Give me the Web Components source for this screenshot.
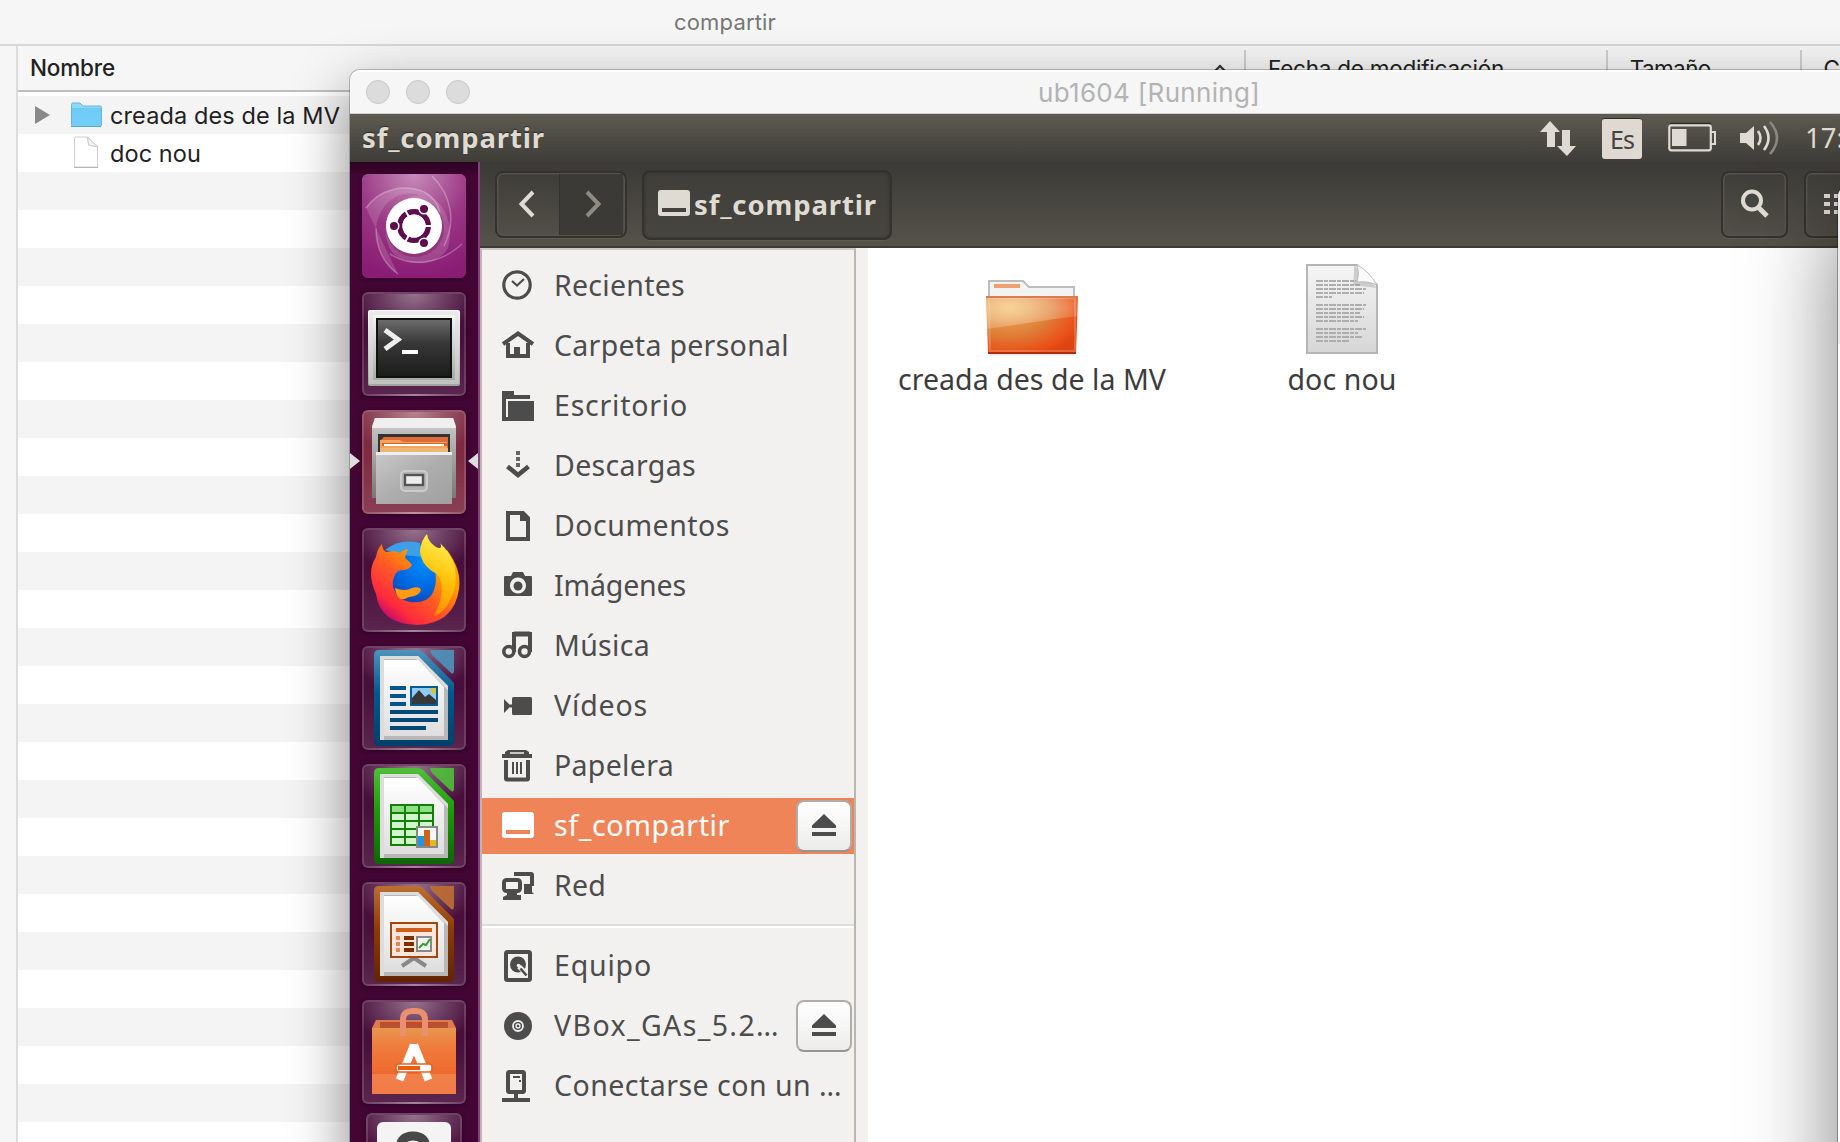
<!DOCTYPE html>
<html lang="es">
<head>
<meta charset="utf-8">
<title>compartir</title>
<style>
html,body{margin:0;height:100%;overflow:hidden;background:#f6f6f6}
body{font-family:Inter,"Liberation Sans",sans-serif}
</style>
</head>
<body>
<desk-top></desk-top>
<script>
const define = (name, css, html, after) => {
  const t = document.createElement('template');
  t.innerHTML = `<style>*{box-sizing:border-box}${css}</style>${html}`;
  customElements.define(name, class extends HTMLElement {
    connectedCallback() {
      if (this.shadowRoot) return;
      this.attachShadow({mode: 'open'}).append(t.content.cloneNode(true));
      if (after) after(this, this.shadowRoot);
    }
  });
};

/* Text line whose tracking is tuned so that it spans the width in `w`. */
define('fit-text', `:host{display:block;white-space:pre;line-height:1.3}span{display:inline-block}`,
  `<span><slot></slot></span>`, (el, root) => {
    const w = +el.getAttribute('w'), s = root.querySelector('span');
    if (!w) return;
    const n = el.textContent.length;
    s.style.letterSpacing = ((w - s.getBoundingClientRect().width) / n) + 'px';
  });

/* ---------- symbolic icons, 32px grid ---------- */
const icons = {
  recent: `<circle cx="15" cy="15" r="13.2" fill="none" stroke="currentColor" stroke-width="3.2"/><path d="M10 11l5 4.6 7-6.6" fill="none" stroke="currentColor" stroke-width="2.2"/>`,
  home: `<path d="M1 14L16 3.500l15 10.500" fill="none" stroke="currentColor" stroke-width="4"/><path d="M6 13v13h20V13" fill="none" stroke="currentColor" stroke-width="4"/><path d="M12 17h6v10h-6z" fill="currentColor"/>`,
  desk: `<path d="M0 1h12v4h16v4H4v18h2V11h26v20H0z" fill="currentColor"/>`,
  down: `<path d="M14 1h4v4h-4zM14 7h4v4h-4zM14 13h4v4h-4z" fill="currentColor" opacity=".85"/><path d="M5.500 16.500L16 25l10.500-8.500" fill="none" stroke="currentColor" stroke-width="4.600"/>`,
  doc: `<path d="M6 3h15l5 5v21H6z" fill="none" stroke="currentColor" stroke-width="4"/><path d="M18 2v9h9V8l-6-6z" fill="currentColor"/>`,
  cam: `<path fill-rule="evenodd" d="M2 7q0-1 1-1h6l2-4h10l2 4h6q1 0 1 1v18q0 1-1 1H3q-1 0-1-1zM16 7.500a8 8 0 1 0 .01 0z" fill="currentColor"/><circle cx="16" cy="16" r="4.500" fill="currentColor"/>`,
  music: `<path d="M12 22V4h16v18" fill="none" stroke="currentColor" stroke-width="4"/><path d="M12 4h16" stroke="currentColor" stroke-width="5"/><circle cx="6.800" cy="21.500" r="5" fill="none" stroke="currentColor" stroke-width="3.600"/><circle cx="22.500" cy="21.500" r="5" fill="none" stroke="currentColor" stroke-width="3.600"/>`,
  video: `<rect x="10" y="7" width="20" height="18" rx="1.500" fill="currentColor"/><path d="M2 9l5 5v4l-5 5zM6 14.500h5v3H6z" fill="currentColor"/>`,
  trash: `<path d="M6 0h18l3 2v2h3v4H0V4h3V2z" fill="currentColor"/><path d="M8 3h14" stroke="#f2f1f0" stroke-width="1.500"/><path d="M4 10V28.500q0 1 1 1h20q1 0 1-1V10" fill="none" stroke="currentColor" stroke-width="4"/><path d="M11 12v12M15 12v12M19 12v12" stroke="currentColor" stroke-width="2"/>`,
  drive: `<path fill-rule="evenodd" d="M3 2h26q3 0 3 3v20q0 3-3 3H3q-3 0-3-3V5q0-3 3-3zM4 20v4h24v-4z" fill="currentColor"/>`,
  net: `<path d="M12 2h17q3 0 3 3v11h-2v6l2 2H22V14h6V6H12z" fill="currentColor"/><rect x="2" y="10" width="16" height="11" rx="2.500" fill="none" stroke="currentColor" stroke-width="4"/><path d="M5 20h10v5h4v5H1v-3l4-2z" fill="currentColor"/>`,
  disk: `<rect x="4" y="2" width="24" height="28" rx="1.500" fill="none" stroke="currentColor" stroke-width="4"/><circle cx="16" cy="14.500" r="8" fill="currentColor"/><path d="M17 16.500l7 7" stroke="#f2f1f0" stroke-width="5"/><circle cx="16.500" cy="15.500" r="1.800" fill="#f2f1f0"/><path d="M18.500 18.500l6 7" stroke="currentColor" stroke-width="2.600"/>`,
  disc: `<circle cx="16" cy="16" r="14" fill="currentColor"/><circle cx="16" cy="16" r="5" fill="none" stroke="#f2f1f0" stroke-width="1.800"/><circle cx="16" cy="16" r="2" fill="none" stroke="#f2f1f0" stroke-width="1.300"/>`,
  server: `<rect x="6" y="2" width="16" height="20" rx="1.500" fill="none" stroke="currentColor" stroke-width="4"/><path d="M11 7h7M17 11h2M14 22v7" stroke="currentColor" stroke-width="2"/><path d="M0 28h28v4H0zM12 22h4v7h-4z" fill="currentColor"/>`,
  eject: `<path d="M16 4l12 11.500V18H4v-2.500zM4 22h24v4H4z" fill="currentColor"/>`,
  find: `<circle cx="13" cy="12.500" r="9" fill="none" stroke="currentColor" stroke-width="4"/><path d="M19 19l9 9" stroke="currentColor" stroke-width="5"/>`,
  prev: `<path d="M20 4l-11.500 12 11.500 12" fill="none" stroke="currentColor" stroke-width="4"/>`,
  next: `<path d="M11 4l11.500 12-11.500 12" fill="none" stroke="currentColor" stroke-width="4"/>`
};
define('sym-icon', `:host{display:block;width:32px;height:32px;flex:none}svg{display:block;width:100%;height:100%}`, `<svg viewBox="0 0 32 32"></svg>`,
  (el, r) => r.querySelector('svg').innerHTML = icons[el.getAttribute('name')]);

/* ---------- Finder window behind ---------- */
define('finder-row', `
:host{display:flex;align-items:center;height:38px;flex:none;background:#fff;color:#1f1f1f;font-size:23.500px}
:host(:nth-child(odd)){background:#f4f4f4}
.a{width:53px;padding-left:17px}.i{width:39px;height:36px}.t{padding-top:2px}`,
`<div class="a"><slot name="arrow"></slot></div><div class="i"><slot name="icon"></slot></div><div class="t"><slot></slot></div>`);

define('finder-window', `
:host{display:flex;flex-direction:column;height:1142px;background:#f6f6f6}
header{height:46px;flex:none;border-bottom:2px solid #d8d8d8;display:flex;align-items:center;padding-left:674px;font-size:22px;color:#777}
main{flex:1;display:flex;padding-left:16px}
.list{flex:1;border-left:2px solid #dcdcdc;display:flex;flex-direction:column;background:#fff;height:1096px;overflow:hidden}
.head{height:46px;flex:none;background:#f6f6f6;border-bottom:2px solid #bfbfbf;display:flex;align-items:center;font-size:22.500px;color:#222}
.head .n{width:1196px;padding-left:12px;font-weight:500}
.c{align-self:stretch;margin-top:4px;border-left:2px solid #cfcfcf;padding-left:22px;display:flex;align-items:center;padding-bottom:3px}
.rows{padding-top:4px}svg{display:block}`,
`<header><fit-text w="102">compartir</fit-text></header>
<main><div class="list"><div class="head"><fit-text class="n" w="85">Nombre</fit-text>
<svg width="14" height="10" style="margin-right:17px"><path d="M1.500 8.500L7 3l5.500 5.500" fill="none" stroke="#333" stroke-width="2.200"/></svg>
<div class="c" style="width:362px"><fit-text w="236">Fecha de modificación</fit-text></div>
<div class="c" style="width:194px"><fit-text w="81">Tamaño</fit-text></div>
<div class="c"><fit-text>C</fit-text></div></div><div class="rows"></div></div></main>`,
(el, r) => {
  const rows = r.querySelector('.rows');
  rows.innerHTML = `<finder-row><svg slot="arrow" width="15" height="18"><path d="M0 0l15 9-15 9z" fill="#898989"/></svg>
<svg slot="icon" width="34" height="36"><defs><linearGradient id="f" x2="0" y2="1"><stop offset="0" stop-color="#6ccbf5"/><stop offset="1" stop-color="#74d0fa"/></linearGradient></defs><path d="M.5 25V7.500q0-1.500 1.500-1.500h7l3 3h17q1.500 0 1.500 1.500V28q0 1-1 1H1.500q-1 0-1-1z" fill="#8fd8fa" stroke="#68b4dc" stroke-width="1"/><path d="M1 11h29v17q0 .8-1 .8H2q-1 0-1-.8z" fill="url(#f)"/><path d="M0 29.500h30" stroke="#54a9d6"/></svg><fit-text w="230">creada des de la MV</fit-text></finder-row>
<finder-row><svg slot="icon" width="34" height="36"><path d="M3.500 3q0-1 1-1h12l10 10v20H3.500z" fill="#fff" stroke="#cfcfcf"/><path d="M16.500 2l1 8 9 2z" fill="#f4f4f4" stroke="#c4c4c4"/><path d="M3 32.500h24" stroke="#b4b4b4"/></svg><fit-text w="91">doc nou</fit-text></finder-row>` + '<finder-row></finder-row>'.repeat(26);
});

/* ---------- Unity launcher ---------- */
const office = (id, c1, c2, c3, body) => `<defs><linearGradient id="${id}" x2="0" y2="1"><stop offset="0" stop-color="${c1}"/><stop offset=".45" stop-color="${c2}"/><stop offset="1" stop-color="${c3}"/></linearGradient><linearGradient id="${id}w" x2="0" y2="1"><stop offset="0" stop-color="#fff"/><stop offset="1" stop-color="#dedede"/></linearGradient></defs>
<path d="M17 4h39q3 0 5 2l31 31v58q0 5-5 5H17q-5 0-5-5V9q0-5 5-5z" fill="url(#${id})"/><path d="M68 4h24v20q0 6-4 2L70 9q-2-3-2-5z" fill="${c1}" opacity=".9"/>
<path d="M18 10h38l30 30v54H18z" fill="#b8b8b8"/><path d="M18 10h38l30 30v4L54 13H22v81h-4z" fill="#dcdcdc"/><path d="M22 14h34l26 27v49H22z" fill="url(#${id}w)"/>${body}`;
const apps = {
dash: `<defs><radialGradient id="d" cx=".5" cy="0" r="1"><stop offset="0" stop-color="#c68cb8"/><stop offset=".55" stop-color="#9a3684"/><stop offset="1" stop-color="#8a1c74"/></radialGradient></defs><rect width="104" height="104" rx="6" fill="url(#d)"/>
<path d="M4 34C18 14 44 10 62 18 84 28 92 52 86 74 76 90 56 94 34 82 22 72 20 50 30 36 40 24 54 20 60 22 34 12 16 34 14 54c0 22 10 38 22 46" fill="#fff" fill-opacity=".15"/>
<path d="M4 34C18 14 44 10 62 18 70 22 76 30 78 38M70 2c20 20 24 46 12 70M14 54c0 20 8 36 22 46M28 80c22 14 50 10 72-10" fill="none" stroke="#fff" stroke-opacity=".28" stroke-width="1.500"/><circle cx="53" cy="54" r="29" fill="#5c0d49" opacity=".3"/><circle cx="52" cy="52" r="28" fill="#fff"/><circle cx="52" cy="52" r="14.300" fill="none" stroke="#5f0e4d" stroke-width="5.400"/><g stroke="#fff" stroke-width="2"><path d="M52 52h20M52 52L42 34M52 52L42 70" /></g><circle cx="52" cy="52" r="11.500" fill="#fff"/><g fill="#5f0e4d" stroke="#fff" stroke-width="1.500"><circle cx="32" cy="52" r="4.800"/><circle cx="62" cy="35" r="4.800"/><circle cx="62" cy="69" r="4.800"/></g>`,
term: `<defs><linearGradient id="t1" x2="0" y2="1"><stop offset="0" stop-color="#fafafa"/><stop offset="1" stop-color="#a0a4a0"/></linearGradient><linearGradient id="t2" x2="0" y2="1"><stop offset="0" stop-color="#6c6c6c"/><stop offset=".4" stop-color="#383838"/><stop offset="1" stop-color="#1c1c1c"/></linearGradient></defs><rect x="6" y="18" width="92" height="76" rx="2" fill="url(#t1)"/><rect x="9" y="21" width="86" height="69" fill="none" stroke="#ddd" stroke-opacity=".5" stroke-width="4"/><rect x="14" y="26" width="76" height="60" fill="#111"/><rect x="16" y="28" width="72" height="56" fill="url(#t2)"/><path d="M23 38l13 9.500L23 57" fill="none" stroke="#eee" stroke-width="5"/><path d="M40 58h16v4H40z" fill="#fff"/>`,
files: `<defs><linearGradient id="n1" x2="0" y2="1"><stop offset="0" stop-color="#eee"/><stop offset=".15" stop-color="#c0c0c0"/><stop offset="1" stop-color="#777"/></linearGradient><linearGradient id="n2" x2="1" y2="1"><stop offset="0" stop-color="#c8c8c8"/><stop offset=".5" stop-color="#adadad"/><stop offset="1" stop-color="#a0a0a0"/></linearGradient></defs><path d="M13 8h78l3 8v72H10V16z" fill="url(#n1)"/><path d="M13 8h78l3 10H10z" fill="#efefef"/><path d="M16 24h72v19H16z" fill="#333"/><path d="M22 27h64v16H18V31z" fill="#e06a38"/><path d="M18 30h20l3 2h44v11H18z" fill="#f2a458"/><path d="M20 33h66v3H20z" fill="#d4622c"/><path d="M22 34h60v2H22z" fill="#fff"/><path d="M18 38h68v5H18z" fill="#ecb678"/><path d="M14 43h76v51H14z" fill="url(#n2)"/><path d="M14 42h76v3H14z" fill="#eee"/><rect x="39" y="61" width="26" height="20" rx="4" fill="#b4b4b4" stroke="#ccc" stroke-width="2"/><rect x="43" y="65" width="18" height="10" fill="#eee" stroke="#555" stroke-width="2.400"/>`,
fox: `<defs><linearGradient id="x1" x1=".1" y1=".9" x2=".8" y2=".1"><stop offset="0" stop-color="#b5007f"/><stop offset=".2" stop-color="#ff2a3c"/><stop offset=".5" stop-color="#ff5a26"/><stop offset=".8" stop-color="#ffa000"/></linearGradient><linearGradient id="x2" x1=".6" y1="0" x2=".4" y2="1"><stop offset="0" stop-color="#fff35a"/><stop offset=".5" stop-color="#ffc40c"/><stop offset="1" stop-color="#ff8a00"/></linearGradient><radialGradient id="x3" cx=".65" cy=".3" r=".8"><stop offset="0" stop-color="#008cff"/><stop offset=".5" stop-color="#0062d8"/><stop offset="1" stop-color="#35127a"/></radialGradient></defs>
<g transform="translate(-2)"><circle cx="52" cy="50" r="36" fill="url(#x3)"/><path d="M25 22Q40 10 60 15l3 14-20-2z" fill="#3d9fe8"/><path d="M16 29q1-8 6-13 0 5 4 8 9-2 14 1 2-3 8-4-2 4-3 9 5 4 7 7-3 5-9 5-7 0-9 7-2 5-1 10 4 13 17 15 19 2 24-12 6-18-7-37l20-3q15 20 12 39-5 35-42 36-37-1-41-31Q6 44 16 29z" fill="url(#x1)"/><path d="M35 60q10 4 17 0 8-2 9 2-2 6-12 7-7 4-10 1-3-3-4-10z" fill="#ff9a14"/><path d="M67 6q1 8 9 13 4 2 5 0 0-4-2-5 12 11 16 25 3 20-5 33-5 12-16 16Q88 60 77 46 61 38 60 23q1-11 7-17z" fill="url(#x2)"/></g>`,
writer: office('w', '#4e93bd', '#00598f', '#00406a', `<g fill="#00568c"><path d="M28 40h16v4H28zM28 48h16v4H28zM28 56h16v4H28z"/><path d="M28 64h48v4H28zM28 72h48v4H28zM28 80h36v4H28z" fill="#004876"/></g><path d="M48 40h28v20H48z" fill="#055b92"/><path d="M50 42h24v16H50z" fill="#8fcbf2"/><path d="M68 42h6v6h-4z" fill="#d4c04c"/><path d="M50 58v-6l7-8 6 7 4-3 7 6v4z" fill="#383838"/>`),
calc: office('c', '#4fbf3a', '#1d9a08', '#0c6604', `<path d="M28 40h44v42H28z" fill="#128008"/><g fill="#d2f6cc"><path d="M30 50h12v6H30zM44 50h12v6H44zM58 50h12v6H58zM30 58h12v6H30zM44 58h12v6H44zM58 58h12v6H58zM30 66h12v6H30zM44 66h12v6H44zM30 74h12v6H30zM44 74h12v6H44z"/><path fill="#8fe084" d="M30 42h12v6H30zM44 42h12v6H44zM58 42h12v6H58z"/></g><path d="M55 63h20v20H55z" fill="#f8f8f8" stroke="#888" stroke-width="2"/><path d="M56 72h6v10h-6z" fill="#1e96e0"/><path d="M62 66h6v16h-6z" fill="#d0621c"/><path d="M68 76h6v6h-6z" fill="#e8b820"/>`),
impress: office('i', '#bd6f32', '#8e3a04', '#632400', `<path d="M52 76L40 84M52 76l12 8" stroke="#888" stroke-width="4"/><path d="M29 41h46v34H29z" fill="#fbe6dc" stroke="#a04810" stroke-width="2"/><path d="M34 46h36v4H34z" fill="#d0601c"/><path d="M34 54h4v4h-4zM34 60h4v4h-4zM34 66h4v4h-4z" fill="#e0865a"/><path d="M42 54h10v4H42zM42 60h10v4H42zM42 66h10v4H42z" fill="#7c3000"/><path d="M55 55h14v14H55z" fill="#f2f2f2" stroke="#888" stroke-width="2"/><path d="M57 66l4-4 3 1 4-6" stroke="#30a030" stroke-width="2" fill="none"/>`),
bag: `<defs><linearGradient id="b" x2="0" y2="1"><stop offset="0" stop-color="#e8954f"/><stop offset=".3" stop-color="#ee7b3c"/><stop offset=".69" stop-color="#ee6a2c"/><stop offset=".7" stop-color="#f0804a"/><stop offset="1" stop-color="#f07c46"/></linearGradient></defs><path d="M14 20h76l4 8H10z" fill="#e27a50"/><path d="M18 22h68v6H18z" fill="#b8502f"/><path d="M10 28h84v66H10z" fill="url(#b)"/><path d="M41 36V20q0-9 9-9h4q9 0 9 9v16" fill="none" stroke="#ea9070" stroke-width="6"/><path d="M52 45L37.500 80M52 45l14.500 35" stroke="#fff" stroke-width="8"/><path d="M48 44h8l2 6H46z" fill="#fff"/><rect x="34" y="64" width="36" height="8" rx="3" fill="#fff" stroke="#e8601c" stroke-width="1.500"/><path d="M36 66h22v4H36z" fill="#ea5a10"/>`,
help: `<rect x="11" y="9" width="74" height="90" rx="6" fill="#f4f4f4"/><path d="M34 36q0-13 13-13t13 13q0 6-6 10" fill="none" stroke="#484848" stroke-width="9"/>`
};
define('launcher-tile', `
:host{display:block;position:relative;width:104px;height:104px;flex:none;border-radius:6px;--c:transparent}
:host([app=files]){--c:#79223a}
:host([app=help]){width:96px}
.bg{height:100%;border-radius:6px;background:radial-gradient(ellipse 62px 46px at 50% 0,rgba(255,255,255,.42),rgba(255,255,255,.2) 50%,transparent),linear-gradient(rgba(255,255,255,.04) 40%,rgba(255,255,255,.13)),var(--c);border:2px solid rgba(255,255,255,.14);box-shadow:0 1px 4px rgba(0,0,0,.35)}
svg{position:absolute;left:0;top:0}`, `<div class="bg"></div><svg width="104" height="104" viewBox="0 0 104 104"></svg>`,
(el, r) => r.querySelector('svg').innerHTML = apps[el.getAttribute('app')]);

define('unity-launcher', `
:host{display:flex;flex-direction:column;align-items:center;gap:14px;width:130px;flex:none;padding-top:12px;background:linear-gradient(#2a0320,#420534 14px);border-right:2px solid #83407c;position:relative}
.pip{position:absolute;top:291px;width:0;height:0;border:8px solid transparent}
.l{left:0;border-left:10px solid #ddd;border-right:0}.r{right:0;border-right:10px solid #ddd;border-left:0}`,
['dash','term','files','fox','writer','calc','impress','bag'].map(a => `<launcher-tile app="${a}"></launcher-tile>`).join('') +
`<launcher-tile app="help" style="margin-top:-5px"></launcher-tile><i class="pip l"></i><i class="pip r"></i>`);

/* ---------- Ubuntu top panel ---------- */
define('unity-panel', `
:host{display:flex;align-items:center;height:48px;flex:none;padding-left:12px;background:linear-gradient(#5e5b51,#4d4b44 50%,#3e3d38);color:#dfdbd2;font-family:"Noto Sans","Open Sans",sans-serif}
.t{font-weight:700;font-size:27.500px;width:1178px;text-shadow:0 -1px 1px #2c2b28;margin-top:-1px}
.k{width:40px;height:41px;margin:1px 26px 0 24px;background:#dfd9d1;color:#45443f;border-radius:3px;border-top:1px solid #2d2c29;display:flex;align-items:center;justify-content:center;font-size:25px}
svg{flex:none;display:block}`,
`<fit-text class="t" w="183">sf_compartir</fit-text>
<svg width="38" height="40"><path d="M10 3l10 11h-5v15H7V14H0z" fill="#dfdbd2"/><path d="M22 12h8v16h6L27 38 17 28h5z" fill="#dfdbd2"/></svg>
<div class="k"><fit-text w="24">Es</fit-text></div>
<svg width="50" height="32"><path d="M2 1.500h41" stroke="#2d2c29" stroke-width="1.500"/><rect x="1.300" y="3.300" width="41.500" height="25" rx="2" fill="none" stroke="#dfdbd2" stroke-width="2.200"/><path d="M4 7h14.500v17H4z" fill="#dfdbd2"/><path d="M43 10h4v12h-4" fill="none" stroke="#dfdbd2" stroke-width="2"/></svg>
<svg width="40" height="36" style="margin:0 26px 0 22px"><path d="M0 13h6l8-7v24l-8-7H0z" fill="#dfdbd2"/><path d="M18 11q5 7 0 14M24 6q9 12 0 24" fill="none" stroke="#dfdbd2" stroke-width="2.600"/><path d="M30 2q14 16 0 32" fill="none" stroke="#8b8880" stroke-width="2.600"/></svg>
<fit-text style="font-size:27.500px;margin-left:-1px">17:</fit-text>`);

/* ---------- Nautilus ---------- */
define('files-toolbar', `
:host{display:flex;align-items:center;height:86px;flex:none;padding:0 0 0 15px;background:linear-gradient(#3b3a36,#55524a);border-bottom:2px solid #3b3a36;color:#dfdbd2;font-family:"Noto Sans","Open Sans",sans-serif}
.b{height:67px;border:2px solid #33322e;border-radius:8px;display:flex;align-items:center;box-shadow:inset 0 0 0 1.500px #55534c,0 1px 0 #5d5b53;flex:none}
.b>div{flex:1;height:61px;display:flex;align-items:center;justify-content:center}
.b>.f{background:#3b3a36;color:#8e8b84;border-left:1px solid #33322e}
.p{height:70px;width:250px;margin:2px 0 0 15px;padding:0 0 0 14px;gap:4px;background:linear-gradient(#3f3e39,#474540);box-shadow:inset 0 0 3px #2c2b28,0 1px 0 #5d5b53;font-weight:700;font-size:27.500px}`,
`<div class="b" style="width:132px;padding:0 2px"><div style="flex:none;width:60px"><sym-icon name="prev"></sym-icon></div><div class="f"><sym-icon name="next"></sym-icon></div></div>
<div class="b p"><sym-icon name="drive" style="margin-top:-2px"></sym-icon><fit-text w="183">sf_compartir</fit-text></div>
<div class="b" style="width:67px;margin-left:829px"><div><sym-icon name="find"></sym-icon></div></div>
<div class="b" style="width:80px;margin-left:16px;padding-left:18px"><svg width="40" height="28" fill="#dfdbd2"><path d="M0 4h6v4H0zM10 4h6v4h-6zM0 12h6v4H0zM10 12h6v4h-6zM0 20h6v4H0zM10 20h6v4h-6z"/></svg></div>`);

define('place-item', `
:host{display:flex;align-items:center;height:56px;flex:none;margin-bottom:4px;padding-left:20px;color:#4c4c4c;font-size:28.500px}
:host([active]){background:#f08459;color:#fff}
fit-text,.x{margin:0 0 0 20px}
.e{margin-left:auto;margin-right:2px;width:56px;height:52px;border:2px solid #b0aca6;border-bottom-color:#989590;border-radius:8px;background:linear-gradient(#fff,#ececeb);display:flex;align-items:center;justify-content:center;color:#4c4c4c}
.e[hidden]{display:none}`,
`<sym-icon></sym-icon><span class="x"></span><div class="e"><sym-icon name="eject"></sym-icon></div>`,
(el, r) => {
  const i = document.createElement('sym-icon'); i.setAttribute('name', el.getAttribute('icon'));
  r.querySelector('sym-icon').replaceWith(i);
  const f = document.createElement('fit-text'); f.setAttribute('w', el.getAttribute('w')); f.textContent = el.textContent;
  r.querySelector('.x').replaceWith(f);
  r.querySelector('.e').hidden = !el.hasAttribute('eject');
});

define('places-sidebar', `
:host{display:flex;flex-direction:column;width:376px;flex:none;background:#f2f1f0;border:2px solid #b9b6ae;border-top-color:#cbc9c4;border-bottom:0;padding-top:8px}
hr{margin:6px 0 10px;border:0;height:4px;background:linear-gradient(#dcdbd9 50%,#fff 50%);flex:none}`,
`<place-item icon="recent" w="131">Recientes</place-item><place-item icon="home" w="235">Carpeta personal</place-item>
<place-item icon="desk" w="134">Escritorio</place-item><place-item icon="down" w="142">Descargas</place-item>
<place-item icon="doc" w="176">Documentos</place-item><place-item icon="cam" w="132">Imágenes</place-item>
<place-item icon="music" w="96">Música</place-item><place-item icon="video" w="94">Vídeos</place-item>
<place-item icon="trash" w="120">Papelera</place-item><place-item icon="drive" w="176" active eject>sf_compartir</place-item>
<place-item icon="net" w="52">Red</place-item><hr><place-item icon="disk" w="98">Equipo</place-item>
<place-item icon="disc" w="226" eject>VBox_GAs_5.2…</place-item><place-item icon="server" w="288">Conectarse con un …</place-item>`);

define('file-item', `
:host{display:flex;flex-direction:column;align-items:center;width:310px;color:#3c3c3c;font-size:28.500px}
::slotted(svg){display:block;height:96px;width:96px}fit-text{margin-top:4px}`,
`<slot></slot><span></span>`, (el, r) => {
  const f = document.createElement('fit-text'); f.setAttribute('w', el.getAttribute('w')); f.textContent = el.getAttribute('label');
  r.querySelector('span').replaceWith(f);
});

define('files-view', `
:host{flex:1;display:flex;background:#fff;border-left:12px solid #f2f1f0;padding:13px 0 0 9px}`,
`<file-item w="268" label="creada des de la MV"><svg viewBox="0 0 96 96"><defs><radialGradient id="g" cx=".25" cy=".25" r=".85"><stop offset="0" stop-color="#eca85a"/><stop offset=".5" stop-color="#df8038"/><stop offset=".9" stop-color="#ea4e16"/><stop offset="1" stop-color="#dd4512"/></radialGradient><radialGradient id="h" cx=".27" cy=".3" r=".8"><stop offset="0" stop-color="#fff0c0" stop-opacity=".6"/><stop offset="1" stop-color="#fff" stop-opacity=".12"/></radialGradient></defs>
<path d="M6 93.500h84" stroke="#000" stroke-opacity=".08" stroke-width="2"/><path d="M5 40V20h34l6 6h45v14z" fill="#f3f3f3" stroke="#bdbdbd" stroke-width="2"/><path d="M10 23h26v4H10z" fill="#eea070"/><path d="M2 35h92l-2 57H4z" fill="url(#g)"/><path d="M2 35h92l-1 20Q50 61 3 68z" fill="url(#h)"/><path d="M5 37h86v53H6z" fill="none" stroke="#fff" stroke-opacity=".18" stroke-width="2"/><path d="M2 36h92" stroke="#dc7a50" stroke-width="2"/><path d="M4 92h88" stroke="#b02a0c" stroke-width="2"/></svg></file-item>
<file-item w="109" label="doc nou"><svg viewBox="0 0 96 96"><defs><linearGradient id="p" x2="0" y2="1"><stop offset="0" stop-color="#f5f5f5"/><stop offset="1" stop-color="#d6d6d6"/></linearGradient></defs><path d="M13 4h50l20 20v68H13z" fill="url(#p)" stroke="#b5b5b5" stroke-width="2"/><g stroke="#adadad" stroke-width="2" stroke-dasharray="7 1 4 1"><path d="M22 20h40M22 24h44M22 28h50M22 32h48M22 36h16M22 44h50M22 48h48M22 52h44M22 56h48M22 60h42M22 68h50M22 72h42M22 76h46M22 80h34"/></g><path d="M60 4q0 14-1 20l24 3z" fill="#999" opacity=".4"/><path d="M63 4q3 8 0 17 12-1 20 3Q75 10 63 4z" fill="#fafafa" stroke="#bbb"/></svg></file-item>`);

define('files-window', `
:host{display:flex;flex-direction:column;flex:1;font-family:"Noto Sans","Open Sans",sans-serif}
main{flex:1;display:flex}`, `<files-toolbar></files-toolbar><main><places-sidebar></places-sidebar><files-view></files-view></main>`);

/* ---------- VirtualBox window ---------- */
define('vm-window', `
:host{display:flex;flex-direction:column;width:1640px;height:1200px;border-radius:10px 10px 0 0;background:#f6f6f6;box-shadow:0 0 0 1px rgba(0,0,0,.22),0 22px 60px rgba(0,0,0,.48)}
header{height:44px;flex:none;display:flex;align-items:center;gap:16px;padding-left:16px;border-bottom:1px solid #cfcfcf;box-shadow:inset 0 2px 0 #fff;border-radius:10px 10px 0 0;color:#b3b3b3;font-size:26px}
header i{width:24px;height:24px;border-radius:50%;background:#dcdcdc;border:1px solid #c8c8c8}
header fit-text{margin:2px 0 0 552px}
main{flex:1;display:flex;overflow:hidden}`,
`<header><i></i><i></i><i></i><fit-text w="222">ub1604 [Running]</fit-text></header>
<unity-panel></unity-panel><main><unity-launcher></unity-launcher><files-window></files-window></main>`);

define('desk-top', `
:host{display:block;position:relative;width:1840px;height:1142px;overflow:hidden}
vm-window{position:absolute;left:350px;top:70px}
.edge{position:absolute;left:1838px;top:186px;width:400px;height:1200px;border-radius:10px 0 0 0;background:linear-gradient(#ececec 158px,#fff 158px);box-shadow:0 0 0 1px rgba(0,0,0,.3),0 36px 90px rgba(0,0,0,.5)}`,
`<finder-window></finder-window><vm-window></vm-window><div class="edge"></div>`);
</script>
</body>
</html>
